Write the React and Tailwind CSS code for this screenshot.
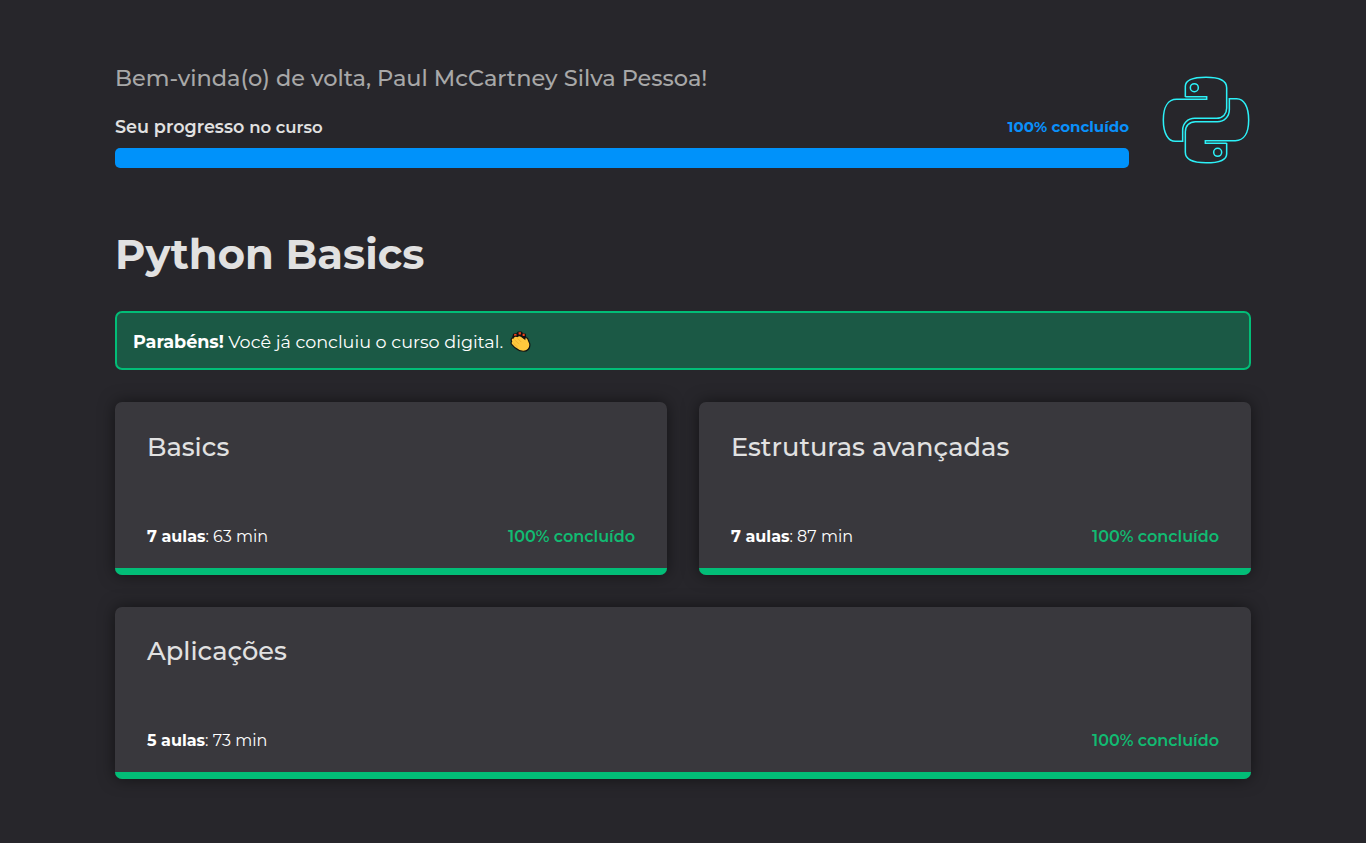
import React from "react";

function PythonLogo() {
  const snake =
    "M106 96 V64 C106 46 130 36.500 168 36.500 C206 36.500 230 47 230 68 V130 C230 147 218 160 200 160 H134 C113 160 98 176 98 196 V229 H76 C54 229 40 204 40 165 C40 126 54 103 80 103 H170 V95 Z";
  return (
    <svg className="h-[88px] w-[88px] shrink-0" viewBox="36 33 264 264" fill="none" stroke="#2cf1f8" strokeWidth="4.600">
      <g>
        <path d={snake.replace("V95 Z", "V95 H106")} />
        <circle cx="133" cy="68" r="12" />
      </g>
      <g transform="rotate(180 168 165)">
        <path d={snake.replace("V95 Z", "V95 H106")} />
        <circle cx="133" cy="68" r="12" />
      </g>
    </svg>
  );
}

function ClapIcon() {
  return (
    <svg className="-mt-px ml-[6.5px] h-[21px] w-[21px]" viewBox="0 0 20 20">
      <path d="M2 6.500 L3 2.500 L6.200 2.200 L7.500 .5 L11 .5 L12.500 2.200 L15 2.600 L15.500 6 L12 9 L5 9 Z" fill="#111" />
      <path d="M4 4h2.200 M8.200 2.200h2.200 M12 3.700h2" stroke="#f0441c" strokeWidth="2.200" />
      <path
        d="M1.600 10 C.5 8 1.600 6.300 3.300 6.500 C3.600 5 5.500 4.500 6.900 5.200 C8 4.300 9.800 4.300 11 5.300 L14 7.600 C13.800 6 16.200 5.700 16.900 7.400 L18.800 12 C19.600 16.500 16.500 19.400 12.500 19.300 C9 19.200 6.800 17.800 4.800 16 L1.800 13 C.8 12 .8 11 1.600 10 Z"
        fill="#ffc83d"
        stroke="#111"
        strokeWidth="1.100"
      />
      <path d="M4.200 8.200 L8.500 12.500 M7.200 7 L10.800 10.600 M3.200 11.500 L7.200 15.300" stroke="#f0ad2c" strokeWidth=".8" />
    </svg>
  );
}

function LessonCard({ title, lessons, minutes, wide }) {
  return (
    <section
      className={`flex flex-col overflow-hidden rounded-[7px] bg-[#39383d] shadow-[0_0_16px_rgba(0,0,0,0.5)] ${
        wide ? "col-span-2 h-[172px]" : "h-[173px]"
      }`}
    >
      <div className={`flex flex-1 flex-col justify-between px-8 pb-[19px] ${wide ? "pt-7" : "pt-[29px]"}`}>
        <h2 className="text-[25.66px] leading-8 font-medium text-[#e1e1e1]">{title}</h2>
        <div className="flex items-center justify-between text-base leading-6 text-white">
          <p>
            <strong className="font-bold">{lessons} aulas</strong>: {minutes} min
          </p>
          <p className="font-semibold text-[#11bb72]">100% concluído</p>
        </div>
      </div>
      <div className="h-[7px] bg-[#02bd77]" />
    </section>
  );
}

export default function App() {
  return (
    <div className="min-h-screen bg-[#27262b] font-['Montserrat','Inter',sans-serif] whitespace-nowrap text-white">
      <main className="mx-auto w-[1136px] pt-[62px]">
        <header className="flex justify-between pr-px">
          <div className="w-[1014px]">
            <p className="text-[22.44px] leading-8 font-medium text-[#a8a8a8]">
              Bem-vinda(o) de volta, Paul McCartney Silva Pessoa!
            </p>
            <div className="mt-[21px] flex h-6 items-center justify-between">
              <span className="text-[17.6px] font-semibold text-[#e1e1e1]">
                Seu progresso <span className="text-[16.5px]">no curso</span>
              </span>
              <span className="text-[15.05px] font-bold text-[#0a90fa]">100% concluído</span>
            </div>
            <div className="mt-[9px] h-5 rounded-[5px] bg-[#0092fa]" />
          </div>
          <div className="pt-3.5">
            <PythonLogo />
          </div>
        </header>

        <h1 className="mt-[58px] text-[41.65px] leading-[56px] font-bold text-[#e1e1e1]">Python Basics</h1>

        <div className="mt-[29px] flex h-[59px] items-center rounded-[7px] border-2 border-[#02bd77] bg-[#1b5945] px-4 pt-[3px] text-[17.6px]">
          <p>
            <strong className="font-bold tracking-[-0.04px]">Parabéns!</strong> Você já concluiu o curso digital.
          </p>
          <ClapIcon />
        </div>

        <div className="mt-8 grid grid-cols-2 gap-8">
          <LessonCard title="Basics" lessons={7} minutes={63} />
          <LessonCard title="Estruturas avançadas" lessons={7} minutes={87} />
          <LessonCard title="Aplicações" lessons={5} minutes={73} wide />
        </div>
      </main>
    </div>
  );
}
